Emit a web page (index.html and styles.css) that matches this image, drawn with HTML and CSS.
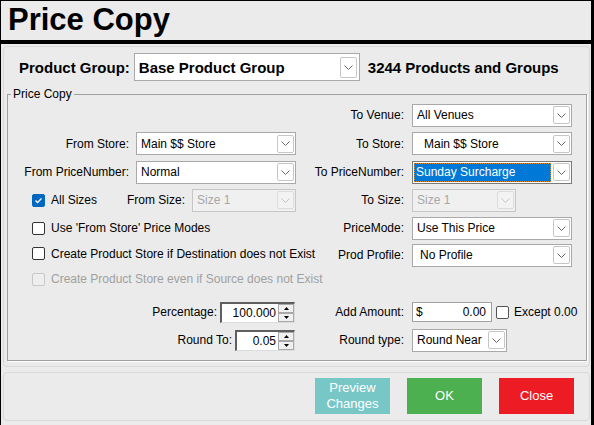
FILE: index.html
```html
<!DOCTYPE html>
<html>
<head>
<meta charset="utf-8">
<link rel="stylesheet" href="styles.css">
</head>
<body>
<div class="window">
  <div class="title">Price Copy</div>
  <div class="panel main">
    <div class="pg-row">
      <span class="pg-label">Product Group:</span>
      <div class="sel pg-sel"><span class="val">Base Product Group</span><span class="dd pg-dd"><svg width="9" height="5" viewBox="0 0 9 5"><path d="M0.5 0.5L4.5 4.5L8.5 0.5" fill="none" stroke="#666" stroke-width="1"/></svg></span></div>
      <span class="pg-count">3244 Products and Groups</span>
    </div>
    <fieldset class="group">
      <legend>Price Copy</legend>
      <div class="form">
        <div class="f cr r1"><span class="lab">To Venue:</span><div class="sel w160"><span class="val">All Venues</span><span class="dd"><svg width="9" height="5" viewBox="0 0 9 5"><path d="M0.5 0.5L4.5 4.5L8.5 0.5" fill="none" stroke="#666" stroke-width="1"/></svg></span></div></div>

        <div class="f cl r2"><span class="lab">From Store:</span><div class="sel w160"><span class="val">Main $$ Store</span><span class="dd"><svg width="9" height="5" viewBox="0 0 9 5"><path d="M0.5 0.5L4.5 4.5L8.5 0.5" fill="none" stroke="#666" stroke-width="1"/></svg></span></div></div>
        <div class="f cr r2"><span class="lab">To Store:</span><div class="sel w160 pad-wide"><span class="val">Main $$ Store</span><span class="dd"><svg width="9" height="5" viewBox="0 0 9 5"><path d="M0.5 0.5L4.5 4.5L8.5 0.5" fill="none" stroke="#666" stroke-width="1"/></svg></span></div></div>

        <div class="f cl r3"><span class="lab">From PriceNumber:</span><div class="sel w160"><span class="val">Normal</span><span class="dd"><svg width="9" height="5" viewBox="0 0 9 5"><path d="M0.5 0.5L4.5 4.5L8.5 0.5" fill="none" stroke="#666" stroke-width="1"/></svg></span></div></div>
        <div class="f cr r3"><span class="lab">To PriceNumber:</span><div class="sel w160 focus"><span class="val">Sunday Surcharge</span><span class="dd"><svg width="9" height="5" viewBox="0 0 9 5"><path d="M0.5 0.5L4.5 4.5L8.5 0.5" fill="none" stroke="#666" stroke-width="1"/></svg></span></div></div>

        <div class="f cl r4 chkrow">
          <span class="cb on"><svg width="11" height="11" viewBox="0 0 11 11"><path d="M2.5 5.5L4.5 7.5L8.5 3.5" fill="none" stroke="#fff" stroke-width="1.3"/></svg></span>
          <span class="cbtext">All Sizes</span>
          <span class="fromsize"><span class="lab2">From Size:</span><div class="sel w104 dis"><span class="val">Size 1</span><span class="dd"><svg width="9" height="5" viewBox="0 0 9 5"><path d="M0.5 0.5L4.5 4.5L8.5 0.5" fill="none" stroke="#c4c4c4" stroke-width="1"/></svg></span></div></span>
        </div>
        <div class="f cr r4"><span class="lab">To Size:</span><div class="sel w104 dis"><span class="val">Size 1</span><span class="dd"><svg width="9" height="5" viewBox="0 0 9 5"><path d="M0.5 0.5L4.5 4.5L8.5 0.5" fill="none" stroke="#c4c4c4" stroke-width="1"/></svg></span></div></div>

        <div class="f cl r5 chkrow"><span class="cb"></span><span class="cbtext">Use 'From Store' Price Modes</span></div>
        <div class="f cr r5"><span class="lab">PriceMode:</span><div class="sel w160"><span class="val">Use This Price</span><span class="dd"><svg width="9" height="5" viewBox="0 0 9 5"><path d="M0.5 0.5L4.5 4.5L8.5 0.5" fill="none" stroke="#666" stroke-width="1"/></svg></span></div></div>

        <div class="f cl r6 chkrow up2"><span class="cb"></span><span class="cbtext">Create Product Store if Destination does not Exist</span></div>
        <div class="f cr r6"><span class="lab">Prod Profile:</span><div class="sel w160 pad-mid"><span class="val">No Profile</span><span class="dd"><svg width="9" height="5" viewBox="0 0 9 5"><path d="M0.5 0.5L4.5 4.5L8.5 0.5" fill="none" stroke="#666" stroke-width="1"/></svg></span></div></div>

        <div class="f cl r7 chkrow disabled"><span class="cb dis"></span><span class="cbtext">Create Product Store even if Source does not Exist</span></div>

        <div class="f cl r9 endrow"><span class="lab3">Percentage:</span><div class="spin w75"><span class="num">100.000</span><span class="arrows"><span><svg width="5" height="3" viewBox="0 0 5 3"><path d="M2.5 0L5 3H0Z" fill="#000"/></svg></span><span><svg width="5" height="3" viewBox="0 0 5 3"><path d="M0 0H5L2.5 3Z" fill="#000"/></svg></span></span></div></div>
        <div class="f cr r9"><span class="lab">Add Amount:</span><div class="amt"><span>$</span><span>0.00</span></div><span class="cb ex"></span><span class="extext">Except 0.00</span></div>

        <div class="f cl r10 endrow"><span class="lab3">Round To:</span><div class="spin w60"><span class="num">0.05</span><span class="arrows"><span><svg width="5" height="3" viewBox="0 0 5 3"><path d="M2.5 0L5 3H0Z" fill="#000"/></svg></span><span><svg width="5" height="3" viewBox="0 0 5 3"><path d="M0 0H5L2.5 3Z" fill="#000"/></svg></span></span></div></div>
        <div class="f cr r10"><span class="lab">Round type:</span><div class="sel w95"><span class="val">Round Near</span><span class="dd"><svg width="9" height="5" viewBox="0 0 9 5"><path d="M0.5 0.5L4.5 4.5L8.5 0.5" fill="none" stroke="#666" stroke-width="1"/></svg></span></div></div>
      </div>
    </fieldset>
  </div>
  <div class="panel btnbar">
    <div class="btn preview">Preview<br>Changes</div>
    <div class="btn ok">OK</div>
    <div class="btn close">Close</div>
  </div>
</div>
</body>
</html>
```

FILE: styles.css
```css
* { box-sizing: border-box; }
html, body { margin: 0; padding: 0; }
body {
  width: 594px;
  height: 425px;
  overflow: hidden;
  background: #ebebeb;
  font-family: "Liberation Sans", Arial, sans-serif;
  font-size: 12px;
  color: #000;
}
.window {
  width: 594px;
  height: 425px;
  border-left: 1px solid #000;
  border-right: 3px solid #000;
  border-top: 1px solid #000;
  background: #ebebeb;
  display: flex;
  flex-direction: column;
}
.title {
  flex: none;
  height: 43px;
  line-height: 38px;
  font-size: 31px;
  font-weight: bold;
  padding-left: 7px;
  border-bottom: 4px solid #000;
}
.panel {
  flex: none;
  border: 1px solid #d3d9dd;
  border-radius: 4px;
  margin: 0 1px 0 2px;
}
.main {
  margin-top: 2px;
  height: 321px;
  display: flex;
  flex-direction: column;
}
.pg-row {
  display: flex;
  align-items: center;
  height: 28px;
  margin-top: 6px;
  padding-left: 15px;
  white-space: nowrap;
}
.pg-label { font-weight: bold; font-size: 15px; margin-right: 4px; }
.pg-count { font-weight: bold; font-size: 15px; margin-left: 8px; }
.sel {
  display: flex;
  align-items: center;
  height: 23px;
  background: #fff;
  border: 1px solid #a9a9a9;
  padding-left: 4px;
  flex: none;
  white-space: nowrap;
}
.sel .val { flex: 1; overflow: hidden; }
.sel .dd {
  flex: none;
  width: 17px;
  height: 18px;
  border: 1px solid #c6c6c6;
  border-radius: 2px;
  margin-right: 1px;
  background: #fff;
  display: flex;
  align-items: center;
  justify-content: center;
}
.pg-sel { width: 226px; height: 28px; font-size: 15px; font-weight: bold; }
.pg-sel .dd { height: 21px; width: 17px; margin-right: 2px; }
.w160 { width: 160px; }
.w104 { width: 104px; }
.w95 { width: 95px; }
.pad-wide { padding-left: 11px; }
.pad-mid { padding-left: 7px; }
.sel.dis { background: #f0f0f0; border-color: #c6c6c6; color: #a8a8a8; }
.sel.dis .dd { border-color: #dcdcdc; background: #f3f3f3; }
.sel.focus { border-color: #7a7a7a; padding: 1px 0 1px 1px; }
.sel.focus .val {
  align-self: stretch;
  display: flex;
  align-items: center;
  background: #0078d7;
  color: #fff;
  padding-left: 2px;
  margin-right: 2px;
  outline: 1px dotted #d88a2a;
  outline-offset: -1px;
}
.group {
  flex: none;
  margin: 6px 2px 0 3px;
  padding: 0;
  height: 274px;
  border: 1px solid #a0a0a0;
  box-shadow: 1px 1px 0 #fff;
  min-width: 0;
}
.group legend {
  padding: 0 2px;
  margin-left: 3px;
  font-size: 12px;
  line-height: 14px;
}
.form {
  display: grid;
  margin-top: 0;
  grid-template-columns: 288px 289px;
  grid-template-rows: 28px 29px 28px 28px 28px 26px 22px 8px 28px 28px;
}
.f { display: flex; align-items: center; white-space: nowrap; min-width: 0; }
.cl { grid-column: 1; }
.cr { grid-column: 2; }
.r1 { grid-row: 1; }
.r2 { grid-row: 2; }
.r3 { grid-row: 3; }
.r4 { grid-row: 4; }
.r5 { grid-row: 5; }
.r6 { grid-row: 6; }
.r7 { grid-row: 7; }
.r9 { grid-row: 9; }
.r10 { grid-row: 10; }
.cl .lab { flex: none; width: 121px; text-align: right; margin-right: 7px; }
.cr .lab { flex: none; width: 108px; text-align: right; margin-right: 8px; }
.chkrow { padding-left: 24px; overflow: visible; }
.up2 { padding-bottom: 3px; }
.cb {
  flex: none;
  width: 13px;
  height: 13px;
  border: 1px solid #333;
  border-radius: 2px;
  background: #fff;
  display: flex;
  align-items: center;
  justify-content: center;
}
.cb.on { background: #0067c0; border-color: #0067c0; }
.cb.dis { border-color: #c8c8c8; background: #eeeeee; }
.cbtext { margin-left: 6px; }
.disabled { color: #a0a0a0; }
.fromsize { margin-left: auto; display: flex; align-items: center; }
.lab2 { margin-right: 7px; }
.endrow { justify-content: flex-end; padding-right: 1px; }
.lab3 { margin-right: 3px; }
.spin {
  display: flex;
  height: 21px;
  background: #fff;
  border-style: solid;
  border-width: 2px 1px 1px 2px;
  border-color: #5f5f5f #dcdcdc #dcdcdc #5f5f5f;
}
.w75 { width: 75px; }
.w60 { width: 60px; }
.spin .num { flex: 1; text-align: right; padding-right: 2px; align-self: center; }
.arrows { width: 16px; display: flex; flex-direction: column; }
.arrows span {
  flex: 1;
  border: 1px solid #a8a8a8;
  background: #f0f0f0;
  display: flex;
  align-items: center;
  justify-content: center;
}
.amt {
  width: 80px;
  height: 20px;
  background: #fff;
  border: 1px solid #a0a0a0;
  display: flex;
  justify-content: space-between;
  align-items: center;
  padding: 0 5px 0 3px;
}
.cb.ex { margin-left: 4px; border-color: #555; }
.extext { margin-left: 5px; }
.btnbar {
  margin-top: 5px;
  height: 49px;
  display: flex;
  justify-content: flex-end;
  align-items: flex-start;
  gap: 17px;
  padding: 5px 15px 0 0;
}
.btn {
  width: 75px;
  height: 36px;
  color: #fff;
  font-size: 13px;
  line-height: 16px;
  display: flex;
  align-items: center;
  justify-content: center;
  text-align: center;
}
.preview { background: #77c7c7; }
.ok { background: #4caf50; }
.close { background: #ed1c24; }
```
